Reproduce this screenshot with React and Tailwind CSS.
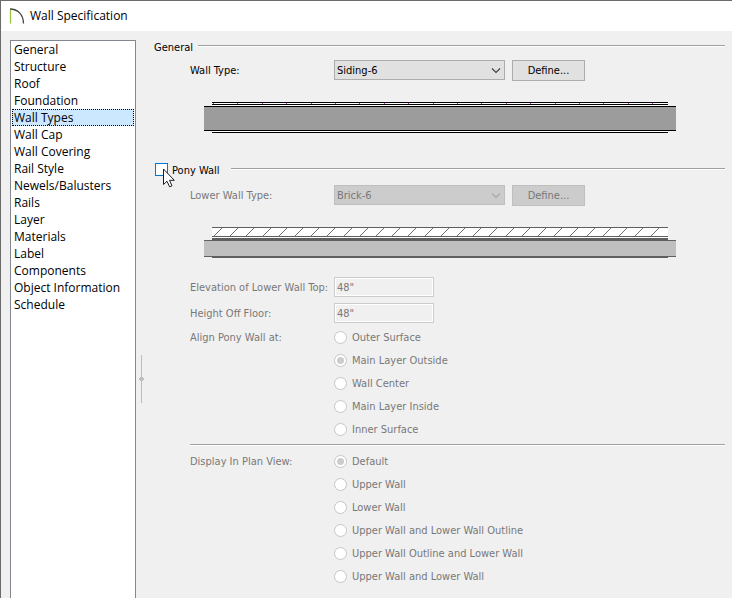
const categories = [
  'General',
  'Structure',
  'Roof',
  'Foundation',
  'Wall Types',
  'Wall Cap',
  'Wall Covering',
  'Rail Style',
  'Newels/Balusters',
  'Rails',
  'Layer',
  'Materials',
  'Label',
  'Components',
  'Object Information',
  'Schedule',
];

const alignOptions = ['Outer Surface', 'Main Layer Outside', 'Wall Center', 'Main Layer Inside', 'Inner Surface'];

const displayOptions = [
  'Default',
  'Upper Wall',
  'Lower Wall',
  'Upper Wall and Lower Wall Outline',
  'Upper Wall Outline and Lower Wall',
  'Upper Wall and Lower Wall',
];

function AppIcon() {
  return (
    <svg width="16" height="16" viewBox="0 0 16 16" fill="none" aria-hidden="true">
      <path d="M1.500 1.500v14" stroke="#9bc53d" strokeWidth="1.300" />
      <path d="M1 1C8.500 1 14.500 6.500 14.500 15.500" stroke="#444" strokeWidth="1.300" />
    </svg>
  );
}

function Cursor() {
  return (
    <svg className="absolute left-[9px] top-[5px]" width="12" height="20" viewBox="0 0 12 20" aria-hidden="true">
      <path
        d="M0.500 1v15.500l3.500-3.300 2.600 5.600 2.400-1-2.500-5.500h4.800z"
        fill="#fff"
        stroke="#1c1c28"
        strokeWidth="1"
      />
    </svg>
  );
}

function Rule({ className = '' }) {
  return <div className={`h-[2px] border-t border-[#a0a0a0] bg-white ${className}`} />;
}

function TypeRow({ id, label, value, disabled }) {
  const box = disabled
    ? 'bg-[#cccccc] border-[#bfbfbf] text-[#787878]'
    : 'bg-[#e1e1e1] border-[#adadad] text-black';
  return (
    <div className="flex items-start">
      <label htmlFor={id} className={`w-[144px] shrink-0 leading-[21px] ${disabled ? 'text-[#787878]' : ''}`}>
        {label}
      </label>
      <div className="relative w-[171px]">
        <select
          id={id}
          disabled={disabled}
          className={`block h-[20px] w-full appearance-none border pl-[2px] pt-px leading-[17px] opacity-100 ${box}`}
        >
          <option>{value}</option>
        </select>
        <svg
          className={`pointer-events-none absolute right-[4px] top-[7px] ${disabled ? 'text-[#a8a8a8]' : 'text-[#444]'}`}
          width="10"
          height="7"
          viewBox="0 0 10 7"
          fill="none"
          stroke="currentColor"
          strokeWidth="1.2"
          aria-hidden="true"
        >
          <path d="M1 1.500l4 4 4-4" />
        </svg>
      </div>
      <button type="button" disabled={disabled} className={`ml-[7px] h-[21px] w-[73px] border pt-px leading-[18px] ${box}`}>
        Define...
      </button>
    </div>
  );
}

function SidingWall() {
  return (
    <svg className="ml-[14px] mt-[21px] block" width="472" height="31" shapeRendering="crispEdges" aria-hidden="true">
      <rect x="8" y="0" width="456" height="4" fill="#fff" />
      <rect x="0" y="4" width="472" height="25" fill="#9c9c9c" />
      <rect x="8" y="29" width="456" height="1" fill="#fff" />
      <g fill="#000">
        <rect x="8" y="0" width="456" height="1" />
        <rect x="8" y="2" width="456" height="1" />
        <rect x="0" y="4" width="472" height="1" />
        <rect x="0" y="28" width="472" height="1" />
        <rect x="8" y="30" width="456" height="1" />
      </g>
      {Array.from({ length: 19 }, (_, i) => (
        <rect key={i} x={Math.round(9 + i * 24.4)} y="1" width="1" height="1" fill="#a03ca0" />
      ))}
    </svg>
  );
}

function BrickWall() {
  return (
    <svg className="ml-[14px] mt-[21px] block" width="472" height="31" aria-hidden="true">
      <g shapeRendering="crispEdges">
        <rect x="8" y="0" width="456" height="13" fill="#fff" />
        <rect x="0" y="13" width="472" height="17" fill="#bfbfbf" />
        <g fill="#5f5f5f">
          <rect x="8" y="0" width="456" height="1" />
          <rect x="8" y="9" width="456" height="1" />
          <rect x="8" y="11" width="456" height="2" />
          <rect x="0" y="13" width="472" height="1" />
          <rect x="0" y="29" width="472" height="1" />
          <rect x="8" y="30" width="456" height="1" />
        </g>
      </g>
      {Array.from({ length: 28 }, (_, i) => {
        const x = Math.round(10 + i * 16.2);
        return <path key={i} d={`M${x} 9L${x + 8} 1`} stroke="#6e6e6e" strokeWidth="1" />;
      })}
    </svg>
  );
}

function RadioGroup({ label, name, options, selected }) {
  return (
    <div role="radiogroup" aria-label={label} className="flex">
      <div className="w-[144px] shrink-0 leading-[23px]">{label}</div>
      <div>
        {options.map((option) => (
          <label key={option} className="flex h-[23px] items-center gap-[5px] leading-[23px]">
            <input
              type="radio"
              name={name}
              disabled
              defaultChecked={option === selected}
              className="grid size-[13px] shrink-0 appearance-none place-content-center rounded-full border border-[#c6c6c6] bg-white before:size-[7px] before:rounded-full checked:before:bg-[#cccccc]"
            />
            {option}
          </label>
        ))}
      </div>
    </div>
  );
}

function HeightField({ id, label }) {
  return (
    <div className="flex h-[20px]">
      <label htmlFor={id} className="w-[144px] shrink-0 whitespace-nowrap leading-[21px]">
        {label}
      </label>
      <input
        id={id}
        disabled
        defaultValue={'48"'}
        className="h-[20px] w-[100px] border border-[#cccccc] bg-[#f0f0f0] pl-[2px] shadow-[inset_0_0_0_1px_#fff]"
      />
    </div>
  );
}

export default function App() {
  return (
    <div className="flex min-h-screen flex-col border-l border-t border-[#6b6b6b] bg-[#f0f0f0] text-black">
      <header className="flex h-[30px] items-center gap-[5px] bg-white pl-[8px] font-['Open_Sans',sans-serif] text-[12px]">
        <AppIcon />
        <h1>Wall Specification</h1>
      </header>

      <div className="flex grow pt-[9px]">
        <nav className="ml-[9px] w-[126px] shrink-0 border border-b-0 border-[#828790] bg-white px-px font-['Open_Sans',sans-serif] text-[12px] leading-[17px]">
          <ul>
            {categories.map((name) => (
              <li key={name}>
                <button
                  type="button"
                  className={`block h-[17px] w-full whitespace-nowrap text-left ${
                    name === 'Wall Types'
                      ? 'border border-dotted border-black bg-[#cce8ff] pl-px leading-[15px]'
                      : 'pl-[2px]'
                  }`}
                >
                  {name}
                </button>
              </li>
            ))}
          </ul>
        </nav>

        <div className="flex w-[18px] shrink-0 flex-col pl-[3px] pt-[315px]">
          <svg width="5" height="48" viewBox="0 0 5 48" fill="#bdbdbd" aria-hidden="true">
            <rect x="2" y="0" width="1" height="48" />
            <path d="M0 23h1v-1h3v1h1v2h-1v1h-3v-1h-1z" />
          </svg>
        </div>

        <main className="min-w-0 grow pb-[10px] pr-[7px] font-[Tahoma,'DejaVu_Sans_Condensed',sans-serif] text-[11px]">
          <section>
            <div className="flex h-[14px] items-start gap-[5px]">
              <h2 className="leading-[15px]">General</h2>
              <Rule className="mt-[5px] grow" />
            </div>
            <div className="pl-[36px] pt-[6px]">
              <TypeRow id="wall-type" label="Wall Type:" value="Siding-6" />
              <SidingWall />
            </div>
          </section>

          <section className="mt-[30px]">
            <div className="flex h-[14px] items-start gap-[11px]">
              <label className="relative flex items-start gap-[4px] pl-px leading-[15px]">
                <input type="checkbox" className="size-[13px] appearance-none border border-[#0078d7] bg-white" />
                Pony Wall
                <Cursor />
              </label>
              <Rule className="mt-[5px] grow" />
            </div>
            <div className="pl-[36px] pt-[8px] text-[#787878]">
              <TypeRow id="lower-wall-type" label="Lower Wall Type:" value="Brick-6" disabled />
              <BrickWall />
              <div className="mb-[3px] mt-[19px] flex flex-col gap-[6px]">
                <HeightField id="elevation" label="Elevation of Lower Wall Top:" />
                <HeightField id="height-off-floor" label="Height Off Floor:" />
              </div>
              <RadioGroup label="Align Pony Wall at:" name="align" options={alignOptions} selected="Main Layer Outside" />
              <Rule className="mb-[4px] mt-[3px]" />
              <RadioGroup label="Display In Plan View:" name="display" options={displayOptions} selected="Default" />
            </div>
          </section>
        </main>
      </div>
    </div>
  );
}
